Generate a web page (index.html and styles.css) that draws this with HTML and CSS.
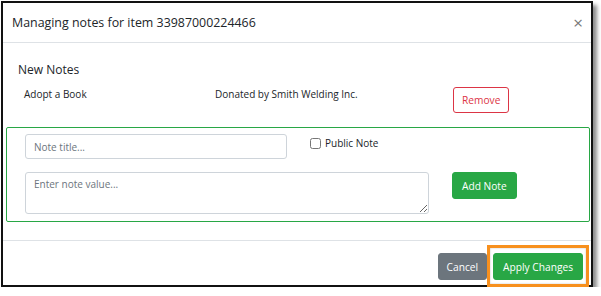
FILE: index.html
```html
<!DOCTYPE html>
<html lang="en">
<head>
  <meta charset="UTF-8">
  <title>Managing notes</title>
  <link rel="stylesheet" href="styles.css">
</head>
<body>

  <div class="frame">
    <div class="modal-header">
      <h5 class="modal-title">Managing notes for item 33987000224466</h5>
      <span class="close">&times;</span>
    </div>

    <div class="modal-body">
      <h6 class="section-title">New Notes</h6>

      <div class="note-row">
        <span class="note-title">Adopt a Book</span>
        <span class="note-value">Donated by Smith Welding Inc.</span>
        <button class="btn btn-outline-danger">Remove</button>
      </div>

      <div class="new-note">
        <div class="new-note-row">
          <input class="form-control title-input" type="text" placeholder="Note title...">
          <label class="check">
            <input type="checkbox"> Public Note
          </label>
        </div>
        <div class="new-note-row">
          <textarea class="form-control value-input" placeholder="Enter note value..."></textarea>
          <button class="btn btn-success">Add Note</button>
        </div>
      </div>
    </div>

    <div class="modal-footer">
      <button class="btn btn-secondary">Cancel</button>
      <span class="highlight">
        <button class="btn btn-success">Apply Changes</button>
      </span>
    </div>
  </div>

</body>
</html>
```

FILE: styles.css
```css
body {
  margin: 0;
  padding: 0;
  background: #fff;
  color: #212529;
  font-family: "Open Sans", sans-serif;
}

.frame {
  margin: 1px 0 0 1px;
  width: 588px;
  height: 282px;
  border: 2px solid #111;
  box-shadow: 4px 4px 4px rgba(0, 0, 0, 0.45);
  display: flex;
  flex-direction: column;
}

.modal-header {
  display: flex;
  align-items: center;
  justify-content: space-between;
  height: 39px;
  padding: 0 8px 0 9px;
  border-bottom: 1px solid #dee2e6;
}

.modal-title {
  margin: 0;
  font-size: 12.4px;
  font-weight: 400;
}

.close {
  font-size: 17px;
  color: #777;
  line-height: 1;
}

.modal-body {
  flex: 1;
  padding: 0 1px 0 3px;
}

.section-title {
  margin: 18px 0 0 12px;
  font-size: 12px;
  font-weight: 400;
  line-height: 18px;
}

.note-row {
  display: flex;
  align-items: flex-start;
  margin-top: 8px;
  padding-left: 18px;
  font-size: 10px;
}

.note-title {
  width: 191px;
  line-height: 14px;
}

.note-value {
  width: 238px;
  line-height: 14px;
}

.btn {
  font-family: "Open Sans", sans-serif;
  font-size: 10.2px;
  border-radius: 3px;
  border: 1px solid transparent;
  cursor: pointer;
  height: 27px;
  padding: 0 9px;
}

.btn-outline-danger {
  height: 26px;
  background: #fff;
  color: #dc3545;
  border-color: #dc3545;
  padding: 0 8px;
}

.btn-success {
  background: #28a745;
  border-color: #28a745;
  color: #fff;
}

.btn-secondary {
  background: #6c757d;
  border-color: #6c757d;
  color: #fff;
  padding: 0 8px;
}

.new-note {
  margin-top: 14px;
  border: 1px solid #28a745;
  border-radius: 2px;
  padding: 6px 0 7px 18px;
  display: flex;
  flex-direction: column;
  gap: 13px;
}

.new-note-row {
  display: flex;
  align-items: flex-start;
}

.form-control {
  box-sizing: border-box;
  border: 1px solid #ced4da;
  border-radius: 3px;
  font-family: "Open Sans", sans-serif;
  font-size: 10px;
  color: #495057;
  padding: 4px 8px;
}

.form-control::placeholder {
  color: #6c757d;
}

.title-input {
  width: 262px;
  height: 25px;
}

.value-input {
  width: 404px;
  height: 42px;
  resize: vertical;
}

.check {
  display: flex;
  align-items: center;
  gap: 4px;
  margin: 2px 0 0 23px;
  font-size: 10px;
}

.check input {
  margin: 0;
  width: 11px;
  height: 11px;
}

.new-note-row .btn-success {
  margin-left: 23px;
}

.modal-footer {
  display: flex;
  justify-content: flex-end;
  align-items: flex-start;
  gap: 6px;
  height: 45px;
  box-sizing: border-box;
  padding: 12px 8px 0 0;
  border-top: 1px solid #dee2e6;
}

.highlight {
  position: relative;
  display: flex;
}

.highlight::after {
  content: "";
  position: absolute;
  left: -6px;
  right: -6px;
  top: -8px;
  bottom: -7px;
  border: 3px solid #f7901e;
  box-shadow: inset 0 0 2px rgba(0, 0, 0, 0.25);
}
```
